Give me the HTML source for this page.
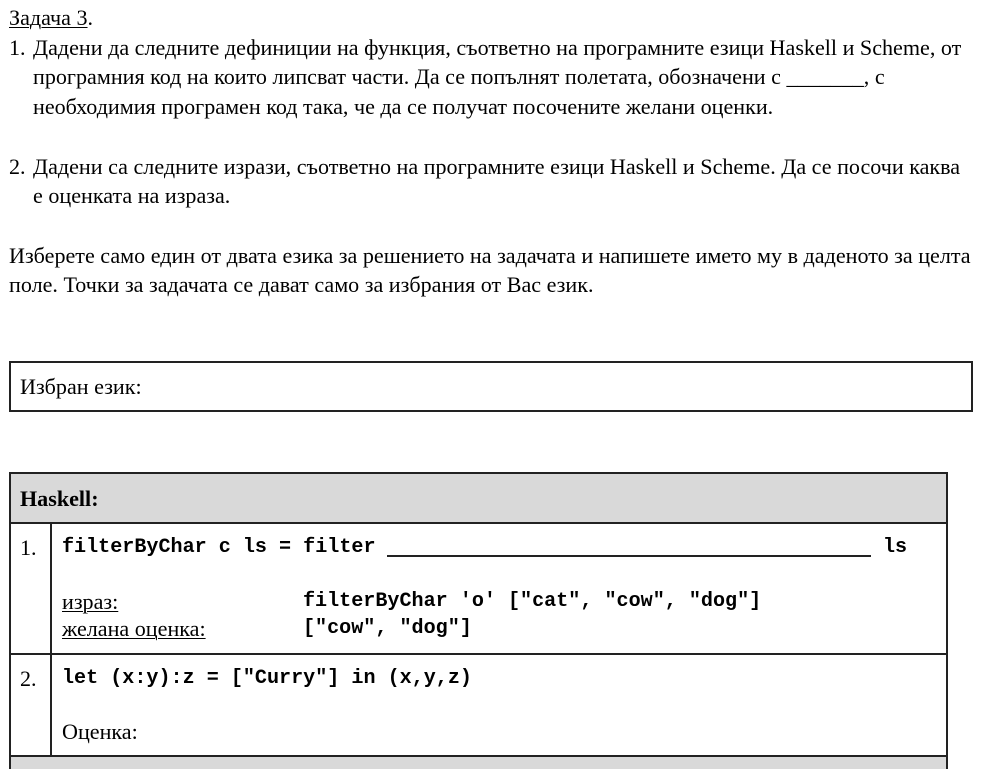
<html><head><style>
html,body{margin:0;width:991px;height:769px;overflow:hidden}
body{background:#fff;font-family:"Liberation Serif",serif;font-size:22.1px;color:#000;position:relative}
.a{position:absolute;white-space:nowrap;line-height:24px}
.m{font-family:"Liberation Mono",monospace;font-weight:bold;font-size:20.1px}
.b{position:absolute;border:2px solid #222;box-sizing:border-box}
u{text-decoration-thickness:1px;text-underline-offset:2px}
</style></head><body>
<div class="a" style="left:9px;top:6px"><u>Задача 3</u>.</div>
<div class="a" style="left:9px;top:36px">1.</div>
<div class="a" style="left:33px;top:36px">Дадени да следните дефиниции на функция, съответно на програмните езици Haskell и Scheme, от</div>
<div class="a" style="left:33px;top:65px">програмния код на които липсват части. Да се попълнят полетата, обозначени с _______, с</div>
<div class="a" style="left:33px;top:95px">необходимия програмен код така, че да се получат посочените желани оценки.</div>
<div class="a" style="left:9px;top:155px">2.</div>
<div class="a" style="left:33px;top:155px">Дадени са следните изрази, съответно на програмните езици Haskell и Scheme. Да се посочи каква</div>
<div class="a" style="left:33px;top:184px">е оценката на израза.</div>
<div class="a" style="left:9px;top:244px">Изберете само един от двата езика за решението на задачата и напишете името му в даденото за целта</div>
<div class="a" style="left:9px;top:273px">поле. Точки за задачата се дават само за избрания от Вас език.</div>
<div class="b" style="left:9px;top:361px;width:964px;height:51px"></div>
<div class="a" style="left:20px;top:375px">Избран език:</div>
<div class="b" style="left:9px;top:472px;width:939px;height:52px;background:#d9d9d9"></div>
<div class="a" style="left:20px;top:487px;font-weight:bold">Haskell:</div>
<div class="b" style="left:9px;top:522px;width:939px;height:133px"></div>
<div class="b" style="left:9px;top:653px;width:939px;height:104px"></div>
<div style="position:absolute;left:50px;top:522px;width:2px;height:233px;background:#222"></div>
<div class="b" style="left:9px;top:755px;width:939px;height:14px;border-bottom:none;background:#d9d9d9"></div>
<div class="a" style="left:20px;top:536px">1.</div>
<div class="a m" style="left:62px;top:536px">filterByChar c ls = filter</div>
<div style="position:absolute;left:387px;top:555px;width:484px;height:2px;background:#222"></div>
<div class="a m" style="left:883px;top:536px">ls</div>
<div class="a" style="left:62px;top:590px"><u>израз:</u></div>
<div class="a" style="left:62px;top:617px"><u>желана оценка:</u></div>
<div class="a m" style="left:303px;top:590px">filterByChar 'o' ["cat", "cow", "dog"]</div>
<div class="a m" style="left:303px;top:617px">["cow", "dog"]</div>
<div class="a" style="left:20px;top:667px">2.</div>
<div class="a m" style="left:62px;top:667px">let (x:y):z = ["Curry"] in (x,y,z)</div>
<div class="a" style="left:62px;top:720px">Оценка:</div>
</body></html>
